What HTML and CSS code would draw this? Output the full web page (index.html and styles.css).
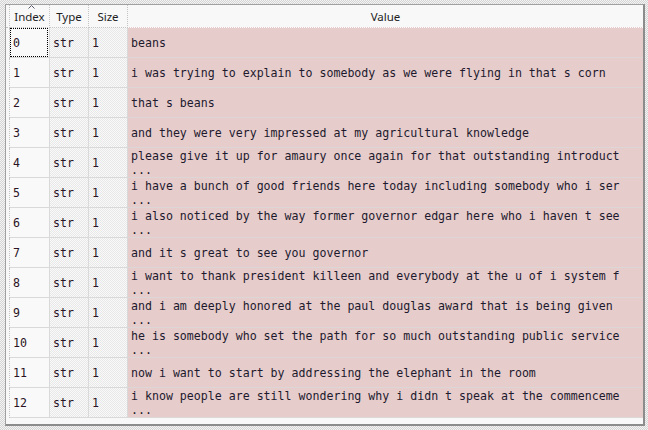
FILE: index.html
```html
<!DOCTYPE html>
<html>
<head>
<meta charset="utf-8">
<link rel="stylesheet" href="styles.css">
</head>
<body>
<div class="frame">
  <div class="header">
    <div class="strip hstrip"></div>
    <div class="hcell idx">Index<svg class="sort" width="7" height="4" viewBox="0 0 7 4"><polyline points="0.5,3.5 3.5,0.5 6.5,3.5" fill="none" stroke="#5a5a6a" stroke-width="1"/></svg></div>
    <div class="hcell typ">Type</div>
    <div class="hcell siz">Size</div>
    <div class="hcell val">Value</div>
  </div>
  <div class="rows">
    <div class="row"><div class="strip"></div><div class="cell idx focus">0</div><div class="cell typ">str</div><div class="cell siz">1</div><div class="cell val">beans</div></div>
    <div class="row"><div class="strip"></div><div class="cell idx">1</div><div class="cell typ">str</div><div class="cell siz">1</div><div class="cell val">i was trying to explain to somebody as we were flying in that s corn</div></div>
    <div class="row"><div class="strip"></div><div class="cell idx">2</div><div class="cell typ">str</div><div class="cell siz">1</div><div class="cell val">that s beans</div></div>
    <div class="row"><div class="strip"></div><div class="cell idx">3</div><div class="cell typ">str</div><div class="cell siz">1</div><div class="cell val">and they were very impressed at my agricultural knowledge</div></div>
    <div class="row"><div class="strip"></div><div class="cell idx">4</div><div class="cell typ">str</div><div class="cell siz">1</div><div class="cell val">please give it up for amaury once again for that outstanding introduct
...</div></div>
    <div class="row"><div class="strip"></div><div class="cell idx">5</div><div class="cell typ">str</div><div class="cell siz">1</div><div class="cell val">i have a bunch of good friends here today including somebody who i ser
...</div></div>
    <div class="row"><div class="strip"></div><div class="cell idx">6</div><div class="cell typ">str</div><div class="cell siz">1</div><div class="cell val">i also noticed by the way former governor edgar here who i haven t see
...</div></div>
    <div class="row"><div class="strip"></div><div class="cell idx">7</div><div class="cell typ">str</div><div class="cell siz">1</div><div class="cell val">and it s great to see you governor</div></div>
    <div class="row"><div class="strip"></div><div class="cell idx">8</div><div class="cell typ">str</div><div class="cell siz">1</div><div class="cell val">i want to thank president killeen and everybody at the u of i system f
...</div></div>
    <div class="row"><div class="strip"></div><div class="cell idx">9</div><div class="cell typ">str</div><div class="cell siz">1</div><div class="cell val">and i am deeply honored at the paul douglas award that is being given
...</div></div>
    <div class="row"><div class="strip"></div><div class="cell idx">10</div><div class="cell typ">str</div><div class="cell siz">1</div><div class="cell val">he is somebody who set the path for so much outstanding public service
...</div></div>
    <div class="row"><div class="strip"></div><div class="cell idx">11</div><div class="cell typ">str</div><div class="cell siz">1</div><div class="cell val">now i want to start by addressing the elephant in the room</div></div>
    <div class="row"><div class="strip"></div><div class="cell idx">12</div><div class="cell typ">str</div><div class="cell siz">1</div><div class="cell val">i know people are still wondering why i didn t speak at the commenceme
...</div></div>
  </div>
  <div class="filler"></div>
</div>
</body>
</html>
```
FILE: styles.css
```css
html, body {
  margin: 0;
  padding: 0;
}
body {
  width: 648px;
  height: 430px;
  overflow: hidden;
  background: repeating-conic-gradient(#d4d4d4 0% 25%, #f4f4f4 0% 50%) 0 0 / 2px 2px;
  padding-top: 4px;
  padding-left: 5px;
  box-sizing: border-box;
}
.frame {
  width: 640px;
  height: 422px;
  box-sizing: border-box;
  border-top: 1px solid #a0a0a0;
  border-left: 1px solid #a0a0a0;
  border-right: 2px solid #8c8c8c;
  border-bottom: 2px solid #8c8c8c;
  background: #f8f8f8;
  display: flex;
  flex-direction: column;
}
.header {
  display: flex;
  height: 23px;
  flex: none;
  font-family: "Noto Sans", "Open Sans", sans-serif;
  font-size: 11.5px;
  color: #1e1e1e;
}
.strip {
  width: 4px;
  flex: none;
  box-sizing: border-box;
  border-right: 1px dotted #c4c4c4;
  background: #f8f8f8;
}
.hstrip {
  border-bottom: 1px dotted #c4c4c4;
}
.hcell {
  position: relative;
  flex: none;
  box-sizing: border-box;
  display: flex;
  align-items: center;
  justify-content: center;
  background: #f8f8f8;
  border-right: 1px dotted #c4c4c4;
  border-bottom: 1px dotted #c4c4c4;
  padding-top: 1px;
}
.hcell.val {
  border-right: none;
  border-bottom: 1px dotted #ffffff;
  background: linear-gradient(#f8f8f8, #f8f8f8) padding-box, linear-gradient(#e7cccc, #e7cccc) border-box;
}
.sort {
  position: absolute;
  top: 0;
  left: 50%;
  margin-left: -2px;
}
.idx { width: 40px; }
.typ { width: 39px; }
.siz { width: 39px; }
.val { flex: 1 1 0; min-width: 0; }
.rows {
  display: flex;
  flex-direction: column;
  flex: none;
}
.row {
  display: flex;
  height: 30px;
}
.cell {
  position: relative;
  flex: none;
  box-sizing: border-box;
  display: flex;
  align-items: center;
  padding-left: 3px;
  font-family: "DejaVu Sans Mono", "Liberation Mono", monospace;
  font-size: 11.6px;
  line-height: 14px;
  white-space: pre;
  overflow: hidden;
  color: #2a1424;
  border-right: 1px solid #d9d9d9;
  border-bottom: 1px solid #d9d9d9;
}
.cell.idx {
  background: #f9f9f9;
}
.cell.typ, .cell.siz {
  background: repeating-conic-gradient(#e8e8e8 0% 25%, #f9f9f9 0% 50%) 0 0 / 2px 2px;
}
.cell.val {
  flex: 1 1 0;
  min-width: 0;
  background: #e7cccc;
  border-right: none;
  border-bottom: 1px solid #dcd6d6;
  color: #1c1a2c;
}
.focus::after {
  content: "";
  position: absolute;
  left: 0;
  top: 0;
  right: 1px;
  bottom: 0;
  outline: 1px dotted #000;
  outline-offset: -1px;
}
.filler {
  flex: 1 1 auto;
  background: #f8f8f8;
}
```
